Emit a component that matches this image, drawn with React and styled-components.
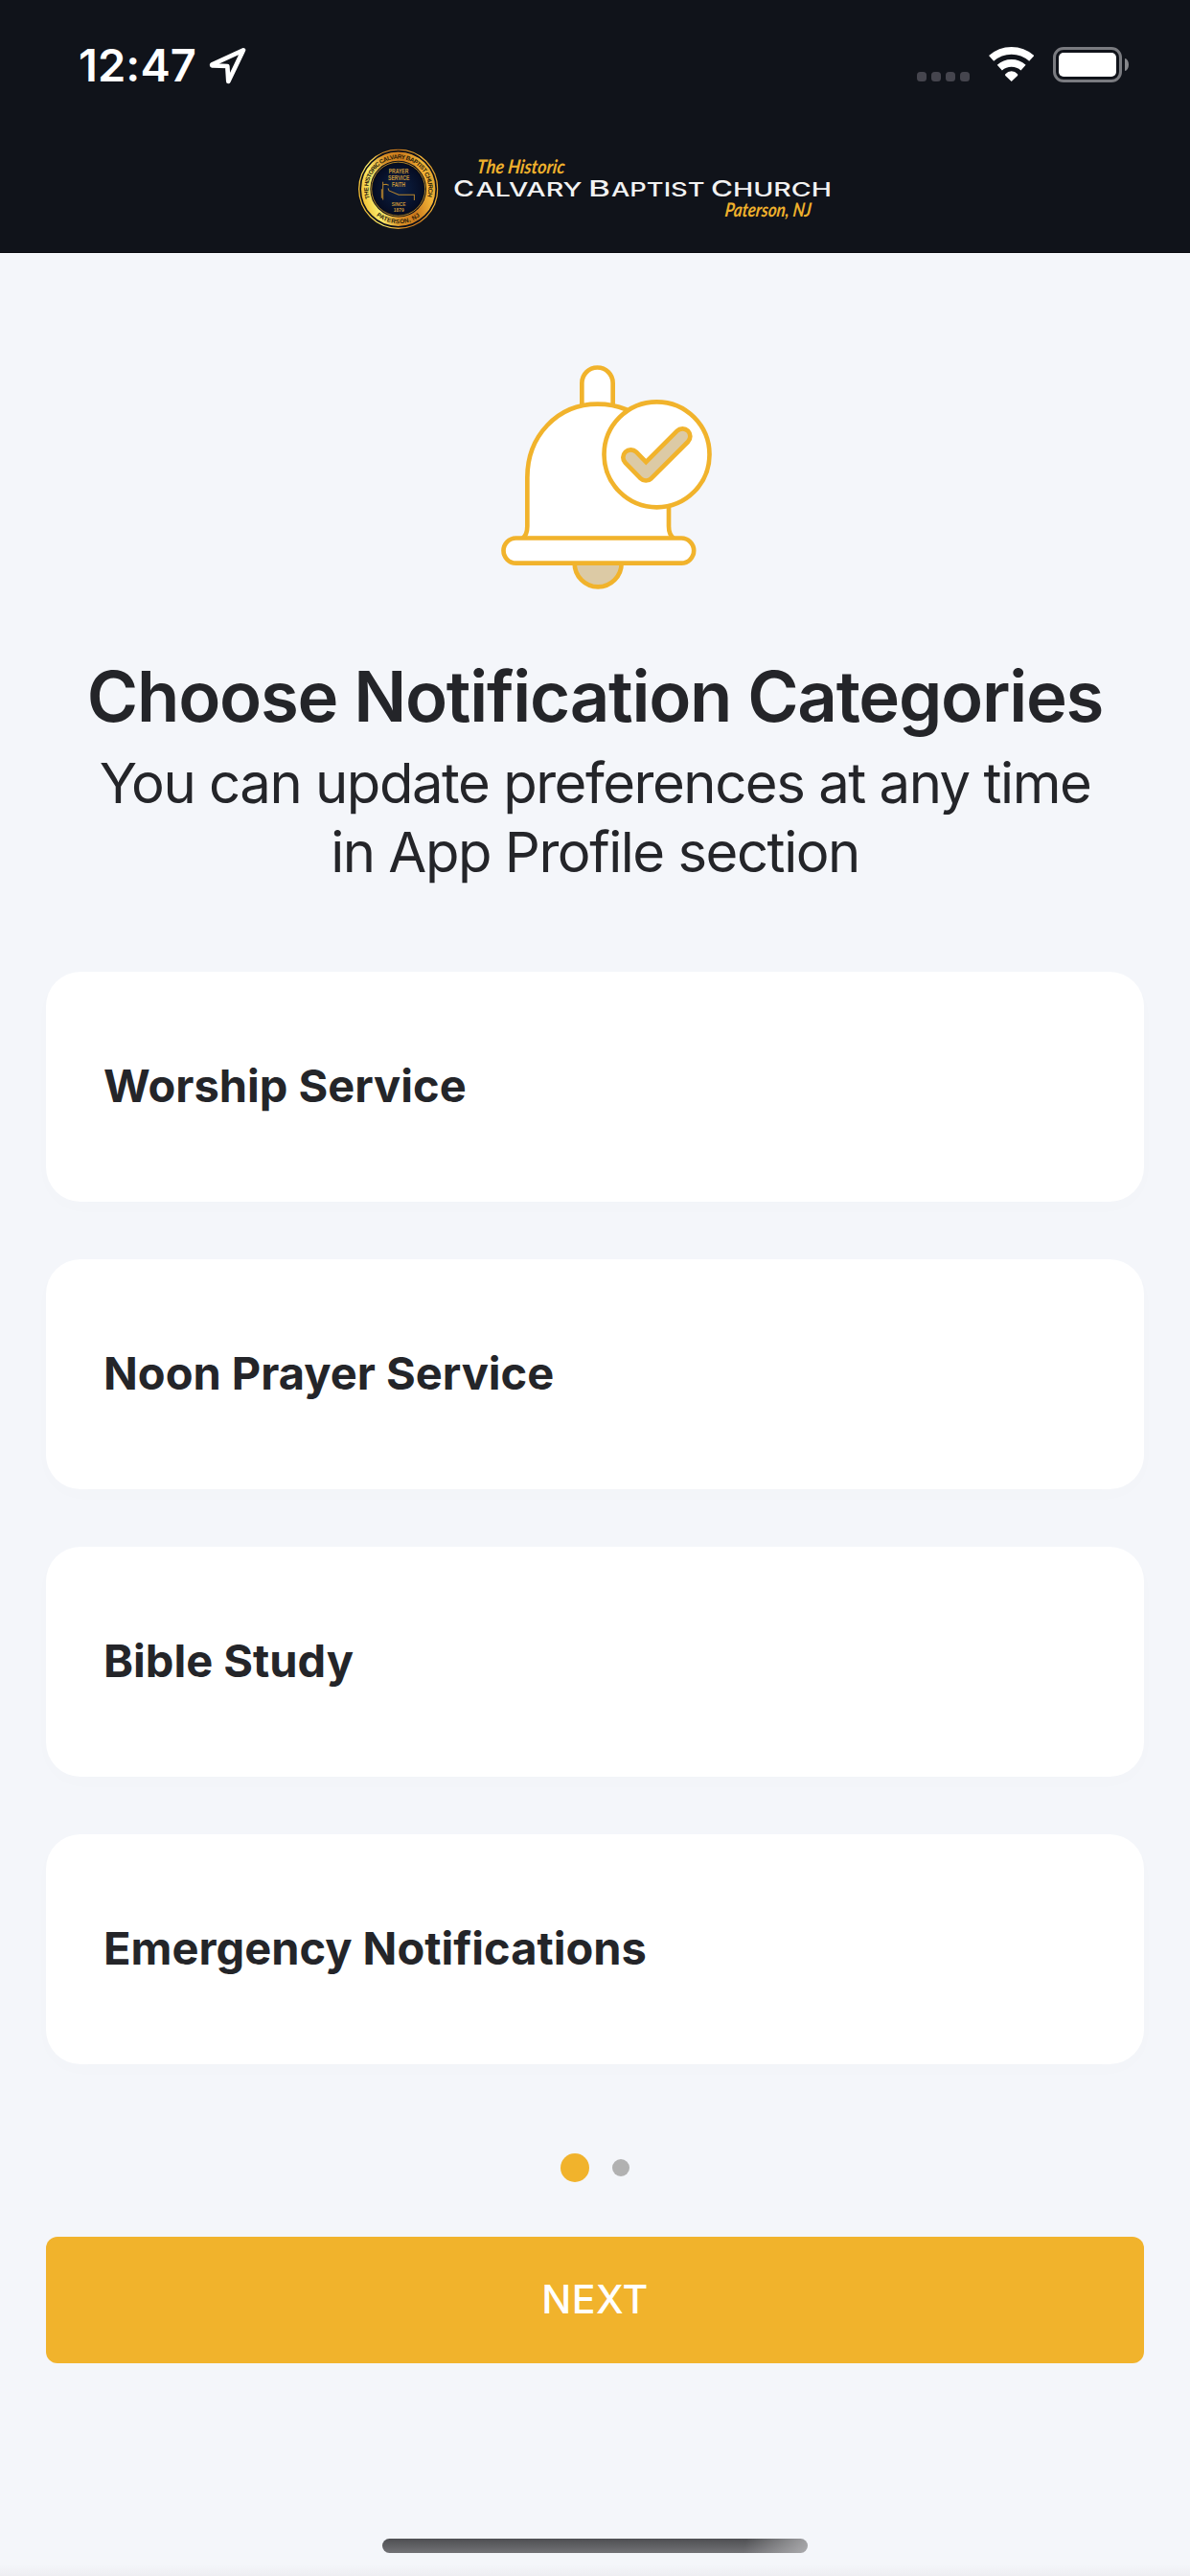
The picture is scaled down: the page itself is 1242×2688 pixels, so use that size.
import React from "react";
import styled, { createGlobalStyle } from "styled-components";

const categories = [
  "Worship Service",
  "Noon Prayer Service",
  "Bible Study",
  "Emergency Notifications"
];

const steps = [0, 1];

const LocationArrow = () => (
  <Arrow viewBox="657 150 112 112">
    <path d="M762 157 L664 202 Q663 204 665 205 L712 207 L715 255 Z" />
  </Arrow>
);

const Wifi = () => (
  <WifiIcon viewBox="0 0 143 108">
    <path d="M7.8 35.8 A94.5 94.5 0 0 1 134.2 35.8" />
    <path d="M33.9 64.8 A55.5 55.5 0 0 1 108.1 64.8" />
    <path
      className="dot"
      d="M71 108 L52 90 Q50 87 52 85 Q60 76 71 76 Q82 76 90 85 Q92 87 90 90 Z"
    />
  </WifiIcon>
);

const StatusBar = () => (
  <Status>
    <Time>12:47</Time>
    <LocationArrow />
    <Indicators>
      <Signal>
        <i />
        <i />
        <i />
        <i />
      </Signal>
      <Wifi />
      <Battery>
        <Shell>
          <Charge />
        </Shell>
        <Nub />
      </Battery>
    </Indicators>
  </Status>
);

const Seal = () => (
  <svg x="374" y="155.5" width="83.4" height="83.4" viewBox="0 0 250 250">
    <defs>
      <linearGradient id="gold" x1="0" y1="0.6" x2="1" y2="0.35">
        <stop offset="0" stopColor="#f0b62c" />
        <stop offset="0.2" stopColor="#f9ec6c" />
        <stop offset="0.42" stopColor="#d98f26" />
        <stop offset="0.62" stopColor="#c9781c" />
        <stop offset="0.85" stopColor="#f3b437" />
        <stop offset="1" stopColor="#d99a2a" />
      </linearGradient>
      <radialGradient id="navy">
        <stop offset="0" stopColor="#0d2247" />
        <stop offset="1" stopColor="#050b20" />
      </radialGradient>
      <path id="topArc" d="M36 154 A94 94 0 1 1 215 152" />
      <path id="bottomArc" d="M56 208 A108 108 0 0 0 196 207" />
    </defs>
    <circle cx="125" cy="125" r="125" fill="url(#gold)" />
    <circle cx="125" cy="125" r="118.5" fill="none" stroke="#0b0e1a" strokeWidth="5" />
    <circle cx="125" cy="125" r="84" fill="url(#navy)" stroke="#0b0e1a" strokeWidth="8" />
    <circle cx="125" cy="125" r="84" fill="none" stroke="#c9962e" strokeWidth="2.5" />
    <SealText $size={19}>
      <textPath href="#topArc" textLength="350" lengthAdjust="spacing">
        THE HISTORIC CALVARY BAPTIST CHURCH
      </textPath>
    </SealText>
    <SealText $size={19}>
      <textPath href="#bottomArc" textLength="148" lengthAdjust="spacing">
        PATERSON, NJ
      </textPath>
    </SealText>
    <SealText $size={19} $gold>
      <tspan x="95" y="75" textLength="62" lengthAdjust="spacingAndGlyphs">PRAYER</tspan>
      <tspan x="93" y="97" textLength="67" lengthAdjust="spacingAndGlyphs">SERVICE</tspan>
      <tspan x="105" y="119" textLength="42" lengthAdjust="spacingAndGlyphs">FAITH</tspan>
    </SealText>
    <SealText $size={16.5} $gold>
      <tspan x="104" y="177" textLength="44" lengthAdjust="spacingAndGlyphs">SINCE</tspan>
      <tspan x="110" y="196" textLength="33" lengthAdjust="spacingAndGlyphs">1879</tspan>
    </SealText>
    <path
      d="M77 103 V159 M73 125 V154 M78 112 L87 110 L95 113 M93 123 L96 130 L126 143 H175 V160"
      fill="none"
      stroke="#b8862d"
      strokeWidth="3"
    />
  </svg>
);

const Logo = () => (
  <LogoArt viewBox="374 155 494 84">
    <Seal />
    <Script transform="translate(497 181) skewX(-7)" textLength="92" lengthAdjust="spacingAndGlyphs">
      The Historic
    </Script>
    <Engraved>
      <tspan x="473" y="204.6" textLength="22" lengthAdjust="spacingAndGlyphs">C</tspan>
      <tspan className="small" x="496.5" textLength="111" lengthAdjust="spacingAndGlyphs">ALVARY</tspan>
      <tspan x="614" textLength="23" lengthAdjust="spacingAndGlyphs">B</tspan>
      <tspan className="small" x="638" textLength="97.5" lengthAdjust="spacingAndGlyphs">APTIST</tspan>
      <tspan x="742" textLength="23" lengthAdjust="spacingAndGlyphs">C</tspan>
      <tspan className="small" x="765" textLength="103" lengthAdjust="spacingAndGlyphs">HURCH</tspan>
    </Engraved>
    <Script transform="translate(756 226.4) skewX(-7)" textLength="90" lengthAdjust="spacingAndGlyphs">
      Paterson, NJ
    </Script>
  </LogoArt>
);

const Bell = () => (
  <BellArt viewBox="-3 63 732 702">
    <path d="M322 195 V119 A48.5 48.5 0 0 1 419 119 V195" />
    <path d="M136 606 Q151 594 151 568 V415 C151 285 245 185 371 185 C500 185 594 285 594 415 V568 Q594 594 610 606 Z" />
    <path className="tan" d="M299 683 A73.5 74 0 0 0 446 683 Z" />
    <rect x="76.5" y="604.5" width="596" height="78.5" rx="39.2" />
    <circle cx="556.5" cy="343" r="165" />
    <polyline className="tick" points="475,352 522.5,400.5 637,286" />
    <polyline className="tick inner" points="475,352 522.5,400.5 637,286" />
  </BellArt>
);

const App = () => {
  return (
    <>
      <GlobalStyle />
      <Screen>
        <Header>
          <StatusBar />
          <Brand>
            <Logo />
          </Brand>
        </Header>
        <Intro>
          <Bell />
          <Title>Choose Notification Categories</Title>
          <Subtitle>
            You can update preferences at any time
            <br />
            in App Profile section
          </Subtitle>
        </Intro>
        <List>
          {categories.map((name) => (
            <Card key={name}>{name}</Card>
          ))}
        </List>
        <Pager>
          {steps.map((step) => (
            <Dot key={step} $active={step === 0} />
          ))}
        </Pager>
        <NextButton>NEXT</NextButton>
        <Footer>
          <HomeIndicator />
        </Footer>
      </Screen>
    </>
  );
};

export default App;

const GlobalStyle = createGlobalStyle`
  * {
    box-sizing: border-box;
  }
  body {
    margin: 0;
    background: #f4f6fa;
    font-family: Inter, "Liberation Sans", sans-serif;
    color: #242529;
  }
`;

const
  Screen = styled.div`
    width: 1242px;
    height: 2688px;
    display: flex;
    flex-direction: column;
    overflow: hidden;
    background: #f4f6fa;
  `,
  Header = styled.header`
    height: 264px;
    background: #10131a;
    border-bottom: 1px solid #08090d;
  `,
  Status = styled.div`
    height: 132px;
    display: flex;
    align-items: flex-start;
    padding: 49px 64px 0 82px;
  `,
  Time = styled.div`
    width: 137px;
    height: 38px;
    line-height: 38px;
    font-size: 47px;
    font-weight: 600;
    letter-spacing: 0.1px;
    white-space: nowrap;
    color: #fff;
  `,
  Arrow = styled.svg`
    width: 37.3px;
    height: 37.3px;
    margin-top: 1px;
    fill: none;
    stroke: #fff;
    stroke-width: 14;
    stroke-linejoin: round;
    overflow: visible;
  `,
  Indicators = styled.div`
    display: flex;
    margin-left: auto;
  `,
  Signal = styled.div`
    display: flex;
    gap: 5px;
    margin: 26px 19.5px 0 0;

    i {
      width: 10px;
      height: 10px;
      border-radius: 3.5px;
      background: #45454e;
    }
  `,
  WifiIcon = styled.svg`
    width: 47.7px;
    height: 36px;
    fill: none;
    stroke: #fff;
    stroke-width: 23;

    .dot {
      fill: #fff;
      stroke: none;
    }
  `,
  Battery = styled.div`
    display: flex;
    align-items: center;
    gap: 3px;
    height: 37px;
    margin-left: 19.8px;
  `,
  Shell = styled.div`
    width: 72px;
    height: 37px;
    padding: 3px;
    border: 3px solid #7a7b80;
    border-radius: 11px;
  `,
  Charge = styled.div`
    height: 25px;
    border-radius: 5px;
    background: #fff;
  `,
  Nub = styled.div`
    width: 4px;
    height: 13px;
    border-radius: 0 4px 4px 0 / 0 6.5px 6.5px 0;
    background: #86878b;
  `,
  Brand = styled.div`
    display: flex;
    justify-content: center;
    padding-top: 23px;
  `,
  LogoArt = styled.svg`
    width: 494px;
    height: 84px;
    overflow: visible;
  `,
  SealText = styled.text`
    font-family: "Liberation Sans", sans-serif;
    font-size: ${(p) => p.$size}px;
    font-weight: 700;
    fill: ${(p) => (p.$gold ? "#c8963a" : "#2a1d0c")};
  `,
  Script = styled.text`
    font-family: Lato, sans-serif;
    font-size: 20px;
    font-style: italic;
    font-weight: 700;
    fill: #eeb02c;
  `,
  Engraved = styled.text`
    font-family: Inter, sans-serif;
    font-size: 23.5px;
    font-weight: 500;
    fill: #f2f2f2;

    .small {
      font-size: 19.6px;
    }
  `,
  Intro = styled.section`
    display: flex;
    flex-direction: column;
    align-items: center;
    height: 750px;
    padding-top: 117px;
    text-align: center;
  `,
  BellArt = styled.svg`
    width: 244px;
    height: 234px;
    fill: #fff;
    stroke: #f1b32c;
    stroke-width: 14;

    .tan {
      fill: #dccaa5;
    }
    .tick {
      fill: none;
      stroke-width: 62;
      stroke-linecap: round;
      stroke-linejoin: round;
    }
    .inner {
      stroke: #dccaa5;
      stroke-width: 34;
    }
  `,
  Title = styled.h1`
    margin: 67px 0 0;
    line-height: 90px;
    font-size: 72.5px;
    font-weight: 600;
    letter-spacing: -1.25px;
    white-space: nowrap;
  `,
  Subtitle = styled.p`
    margin: 9px 0 0;
    line-height: 72px;
    font-size: 58px;
    letter-spacing: -1.47px;
    white-space: nowrap;
  `,
  List = styled.div`
    display: flex;
    flex-direction: column;
    gap: 60px;
    padding: 0 48px;
  `,
  Card = styled.div`
    display: flex;
    align-items: center;
    height: 240px;
    padding: 0 60px 3px;
    border-radius: 36px;
    background: #fff;
    box-shadow: 0 6px 24px rgba(30, 30, 60, 0.012);
    font-size: 47px;
    font-weight: 700;
  `,
  Pager = styled.div`
    display: flex;
    align-items: center;
    justify-content: center;
    gap: 24px;
    height: 30px;
    margin: 93px 0 57px;
  `,
  Dot = styled.span`
    width: ${(p) => (p.$active ? 30 : 18)}px;
    height: ${(p) => (p.$active ? 30 : 18)}px;
    border-radius: 50%;
    background: ${(p) => (p.$active ? "#f1b32c" : "#b1b1b1")};
  `,
  NextButton = styled.button`
    height: 132px;
    margin: 0 48px;
    padding: 0 0 2px;
    border: 0;
    border-radius: 12px;
    background: #f1b32c;
    color: #fff;
    font-family: inherit;
    font-size: 41px;
    font-weight: 500;
    letter-spacing: 0.5px;
  `,
  Footer = styled.footer`
    flex: 1;
    display: flex;
    justify-content: center;
    align-items: flex-end;
    padding-bottom: 24px;
    background: linear-gradient(to top, #eeeef2, #f4f6fa 12px);
  `,
  HomeIndicator = styled.div`
    width: 444px;
    height: 15px;
    border-radius: 8px;
    background:
      linear-gradient(100deg, transparent 85%, rgba(190, 190, 192, 0.75) 100%),
      linear-gradient(#4e4f52, #727276);
  `;
